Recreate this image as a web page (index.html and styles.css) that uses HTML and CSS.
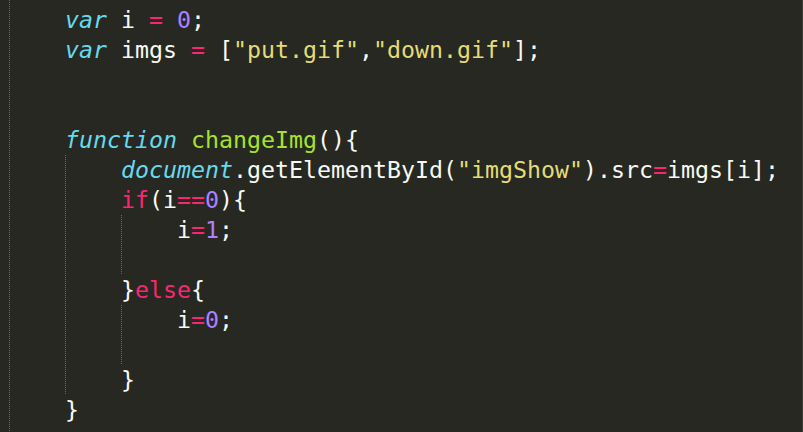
FILE: index.html
```html
<!DOCTYPE html>
<html>
<head>
<meta charset="utf-8">
<link rel="stylesheet" href="styles.css">
</head>
<body>
<div class="editor">
<div class="line">    <span class="k">var</span> i <span class="op">=</span> <span class="n">0</span>;</div>
<div class="line">    <span class="k">var</span> imgs <span class="op">=</span> [<span class="s">"put.gif"</span>,<span class="s">"down.gif"</span>];</div>
<div class="line"> </div>
<div class="line"> </div>
<div class="line">    <span class="k">function</span> <span class="f">changeImg</span>(){</div>
<div class="line g1">        <span class="k">document</span>.getElementById(<span class="s">"imgShow"</span>).src<span class="op">=</span>imgs[i];</div>
<div class="line g1">        <span class="op">if</span>(i<span class="op">==</span><span class="n">0</span>){</div>
<div class="line g1 g2">            i<span class="op">=</span><span class="n">1</span>;</div>
<div class="line g1 g2"> </div>
<div class="line g1">        }<span class="op">else</span>{</div>
<div class="line g1 g2">            i<span class="op">=</span><span class="n">0</span>;</div>
<div class="line g1 g2"> </div>
<div class="line g1">        }</div>
<div class="line">    }</div>
</div>
</body>
</html>
```
FILE: styles.css
```css
html, body {
  margin: 0;
  padding: 0;
  background: #272822;
}
body {
  width: 803px;
  height: 432px;
  overflow: hidden;
}
.editor {
  box-sizing: border-box;
  width: 803px;
  height: 432px;
  padding: 5px 0 0 9px;
  border-right: 1px solid #3e3f38;
  background-color: #272822;
  background-image: linear-gradient(to bottom, #6a6b64 50%, transparent 50%);
  background-size: 1px 2px;
  background-repeat: repeat-y;
  background-position: 9px 0;
  font-family: "DejaVu Sans Mono", "Liberation Mono", monospace;
  font-size: 23.25px;
  color: #f8f8f2;
}
.line {
  height: 30px;
  line-height: 30px;
  white-space: pre;
}
.g1 {
  background-image: linear-gradient(to bottom, #6a6b64 50%, transparent 50%);
  background-size: 1px 2px;
  background-repeat: repeat-y;
  background-position: 56px 0;
}
.g1.g2 {
  background-image: linear-gradient(to bottom, #6a6b64 50%, transparent 50%), linear-gradient(to bottom, #6a6b64 50%, transparent 50%);
  background-size: 1px 2px, 1px 2px;
  background-repeat: repeat-y, repeat-y;
  background-position: 56px 0, 112px 0;
}
.k {
  color: #66d9ef;
  font-style: italic;
}
.op {
  color: #f92672;
}
.n {
  color: #ae81ff;
}
.s {
  color: #e6db74;
}
.f {
  color: #a6e22e;
}
```
